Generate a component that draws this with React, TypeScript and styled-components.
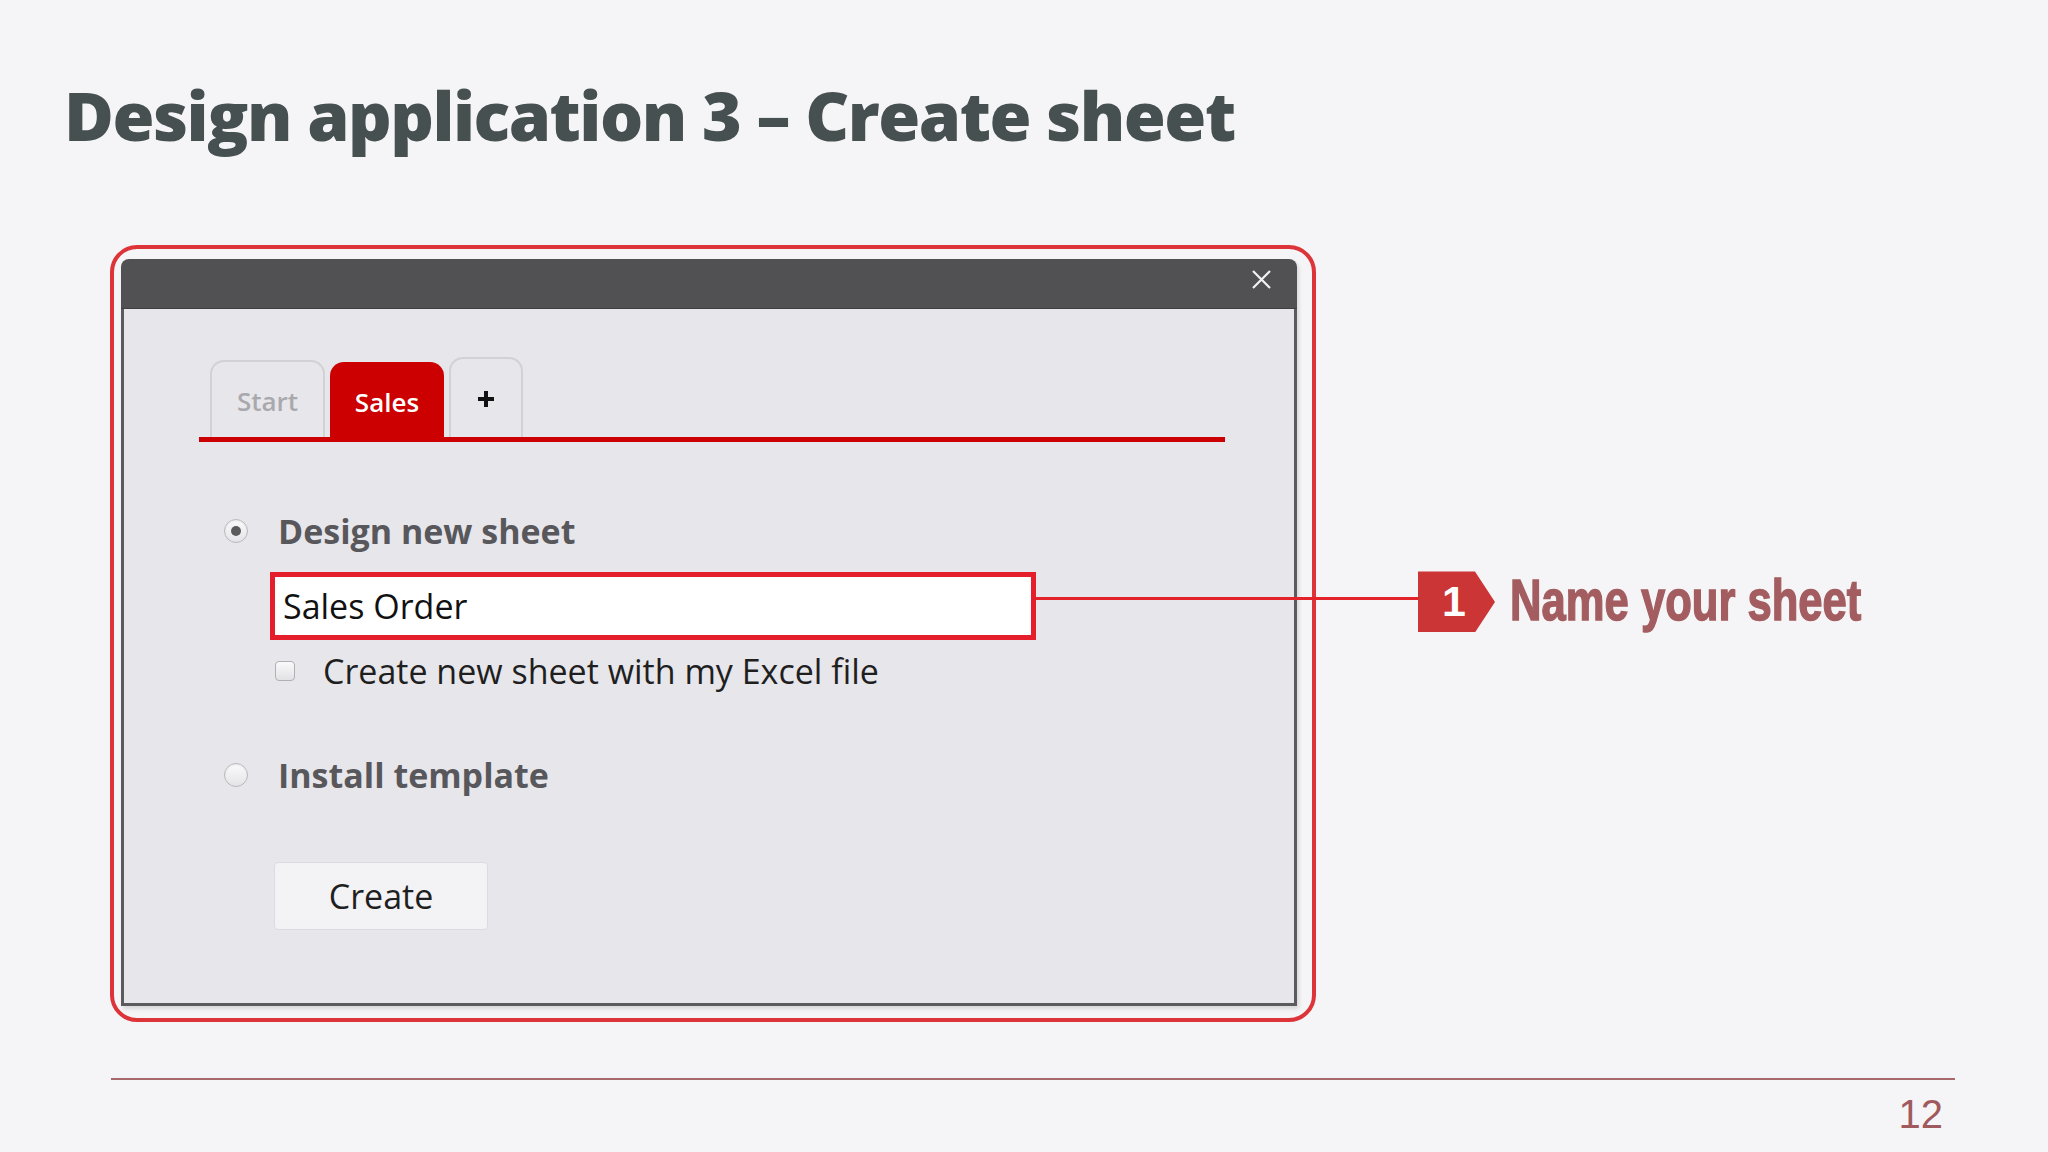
import React from 'react';
import styled, { createGlobalStyle } from 'styled-components';

////// STYLE >>>>>>>>>>>>>>>>>>>>>>>>>>>>>>>>>>>>>>>>>>>>>>>>>>>>>>>>>>>>>>>>>>>

const GlobalStyle = createGlobalStyle`
  html, body {
    margin: 0;
    padding: 0;
    background: #f5f5f7;
  }
  body {
    font-family: "Open Sans", "Liberation Sans", sans-serif;
  }
`;

const Slide = styled.div`
  width: 2048px;
  height: 1152px;
  display: flex;
  flex-direction: column;
  background: #f5f5f7;
  overflow: hidden;
`;

const Title = styled.h1`
  margin: 78px 0 0 64px;
  font-family: "Open Sans", "Liberation Sans", sans-serif;
  font-weight: 800;
  font-size: 68px;
  line-height: 1.08;
  color: #475050;
  letter-spacing: -1.5px;
`;

const Stage = styled.div`
  margin: 94px 0 0 110px;
  display: flex;
`;

const Frame = styled.div`
  width: 1206px;
  height: 777px;
  box-sizing: border-box;
  border: 4px solid #dc3439;
  border-radius: 27px;
  padding: 10px 15px 12px 7px;
  display: flex;
`;

const Dialog = styled.div`
  flex: 1;
  display: flex;
  flex-direction: column;
  box-shadow: 2px 3px 4px rgba(0, 0, 0, 0.12);
  border-radius: 8px 8px 0 0;
`;

const Header = styled.div`
  height: 50px;
  flex: none;
  background: #515052;
  border-radius: 8px 8px 0 0;
  display: flex;
  align-items: center;
  justify-content: flex-end;
  padding-right: 25px;
  border-bottom: 1px solid #3f3e40;
  box-sizing: border-box;
`;

const CloseButton = styled.div`
  width: 22px;
  height: 22px;
  display: flex;
  align-items: center;
  justify-content: center;
  margin-top: -8px;
`;

const Body = styled.div`
  flex: 1;
  background: #e7e6eb;
  border: 3px solid #5b5b5d;
  border-top: none;
  padding: 48px 69px 0 75px;
  display: flex;
  flex-direction: column;
`;

const TabStrip = styled.div`
  display: flex;
  align-items: flex-end;
  gap: 5px;
  padding-left: 11px;
  border-bottom: 5px solid #cc0000;
`;

const Tab = styled.div<{ $active?: boolean; $w: number; $h: number }>`
  width: ${p => p.$w}px;
  height: ${p => p.$h}px;
  box-sizing: border-box;
  border: 2px solid ${p => (p.$active ? '#cc0000' : '#d2d1d6')};
  border-bottom: none;
  border-radius: 14px 14px 0 0;
  background: ${p => (p.$active ? '#cc0000' : '#e7e6eb')};
  color: ${p => (p.$active ? '#ffffff' : '#a9a9ad')};
  font-size: 26px;
  font-weight: 600;
  display: flex;
  align-items: center;
  justify-content: center;
  padding-top: 2px;
`;

const Form = styled.div`
  display: flex;
  flex-direction: column;
  padding-left: 25px;
`;

const OptionRow = styled.div<{ $top: number }>`
  display: flex;
  align-items: center;
  gap: 30px;
  height: 44px;
  margin-top: ${p => p.$top}px;
`;

const Radio = styled.div<{ $checked?: boolean }>`
  width: 24px;
  height: 24px;
  box-sizing: border-box;
  border-radius: 50%;
  border: 1px solid #b9b9be;
  background: linear-gradient(#fbfbfc, #e4e4e8);
  box-shadow: inset 0 1px 2px rgba(0, 0, 0, 0.08);
  display: flex;
  align-items: center;
  justify-content: center;
  &::after {
    content: '';
    display: ${p => (p.$checked ? 'block' : 'none')};
    width: 10px;
    height: 10px;
    border-radius: 50%;
    background: #5a5a5e;
  }
`;

const OptionLabel = styled.span`
  font-size: 34px;
  font-weight: 700;
  color: #58585c;
  line-height: 1;
`;

const Indented = styled.div`
  margin-left: 46px;
  display: flex;
  flex-direction: column;
`;

const InputRow = styled.div`
  position: relative;
  width: 766px;
  margin-top: 19px;
`;

const TextBox = styled.div`
  height: 68px;
  box-sizing: border-box;
  border: 5px solid #e41e2b;
  background: #ffffff;
  padding-left: 8px;
  display: flex;
  align-items: center;
  font-size: 34px;
  color: #111111;
`;

const Callout = styled.div`
  position: absolute;
  left: 100%;
  top: -1px;
  height: 61px;
  display: flex;
  align-items: center;
`;

const Connector = styled.div`
  width: 382px;
  height: 3px;
  background: #e3222a;
  margin-top: -6px;
`;

const Badge = styled.div`
  width: 77px;
  height: 61px;
  flex: none;
  background: #cc3535;
  clip-path: polygon(0 0, 74% 0, 100% 50%, 74% 100%, 0 100%);
  color: #ffffff;
  font-family: "Liberation Sans", Arial, sans-serif;
  font-weight: 700;
  font-size: 43px;
  display: flex;
  align-items: center;
  padding-left: 24px;
  box-sizing: border-box;
`;

const CalloutText = styled.span`
  margin-left: 15px;
  font-family: "Liberation Sans", Arial, sans-serif;
  font-weight: 700;
  font-size: 57px;
  color: #a35d60;
  white-space: nowrap;
  -webkit-text-stroke: 1.5px #a35d60;
  transform: scaleX(0.765);
  transform-origin: left center;
  margin-top: -3px;
`;

const CheckRow = styled.div`
  display: flex;
  align-items: center;
  height: 40px;
  margin-top: 11px;
  margin-left: 5px;
  gap: 28px;
`;

const CheckBox = styled.div`
  width: 20px;
  height: 20px;
  box-sizing: border-box;
  border-radius: 4px;
  border: 1px solid #b0b0b5;
  background: linear-gradient(#fafafb, #e2e2e6);
`;

const CheckLabel = styled.span`
  font-size: 34px;
  color: #1f1f1f;
  line-height: 1;
`;

const CreateButton = styled.div`
  margin: 65px 0 0 50px;
  width: 214px;
  height: 68px;
  box-sizing: border-box;
  border: 1px solid #dcdce0;
  border-radius: 4px;
  background: #f3f3f5;
  display: flex;
  align-items: center;
  justify-content: center;
  font-size: 34px;
  color: #1f1f1f;
`;

const Footer = styled.div`
  margin: 56px 93px 0 111px;
  display: flex;
  flex-direction: column;
  align-items: flex-end;
`;

const Rule = styled.div`
  align-self: stretch;
  height: 2px;
  background: #a7686b;
`;

const PageNumber = styled.span`
  margin-top: 14px;
  margin-right: 12px;
  font-family: "Liberation Sans", Arial, sans-serif;
  font-size: 40px;
  line-height: 1;
  color: #a05a5e;
`;

////// COMPONENT >>>>>>>>>>>>>>>>>>>>>>>>>>>>>>>>>>>>>>>>>>>>>>>>>>>>>>>>>>>>>>>

const CloseIcon = () => (
  <svg width="21" height="19" viewBox="0 0 21 19">
    <path d="M2 1 L19 18 M19 1 L2 18" stroke="#f2f2f2" strokeWidth="2.2" fill="none" />
  </svg>
);

const PlusIcon = () => (
  <svg width="18" height="18" viewBox="0 0 18 18">
    <path d="M9 1 V17 M1 9 H17" stroke="#111" strokeWidth="4" fill="none" />
  </svg>
);

const App = () => {
  return (
    <>
      <GlobalStyle />
      <Slide>
        <Title>Design application 3 – Create sheet</Title>
        <Stage>
          <Frame>
            <Dialog>
              <Header>
                <CloseButton>
                  <CloseIcon />
                </CloseButton>
              </Header>
              <Body>
                <TabStrip>
                  <Tab $w={115} $h={77}>Start</Tab>
                  <Tab $w={114} $h={75} $active>Sales</Tab>
                  <Tab $w={74} $h={80}>
                    <PlusIcon />
                  </Tab>
                </TabStrip>
                <Form>
                  <OptionRow $top={67}>
                    <Radio $checked />
                    <OptionLabel>Design new sheet</OptionLabel>
                  </OptionRow>
                  <Indented>
                    <InputRow>
                      <TextBox>Sales Order</TextBox>
                      <Callout>
                        <Connector />
                        <Badge>1</Badge>
                        <CalloutText>Name your sheet</CalloutText>
                      </Callout>
                    </InputRow>
                    <CheckRow>
                      <CheckBox />
                      <CheckLabel>Create new sheet with my Excel file</CheckLabel>
                    </CheckRow>
                  </Indented>
                  <OptionRow $top={62}>
                    <Radio />
                    <OptionLabel>Install template</OptionLabel>
                  </OptionRow>
                  <CreateButton>Create</CreateButton>
                </Form>
              </Body>
            </Dialog>
          </Frame>
        </Stage>
        <Footer>
          <Rule />
          <PageNumber>12</PageNumber>
        </Footer>
      </Slide>
    </>
  );
};

export default App;
